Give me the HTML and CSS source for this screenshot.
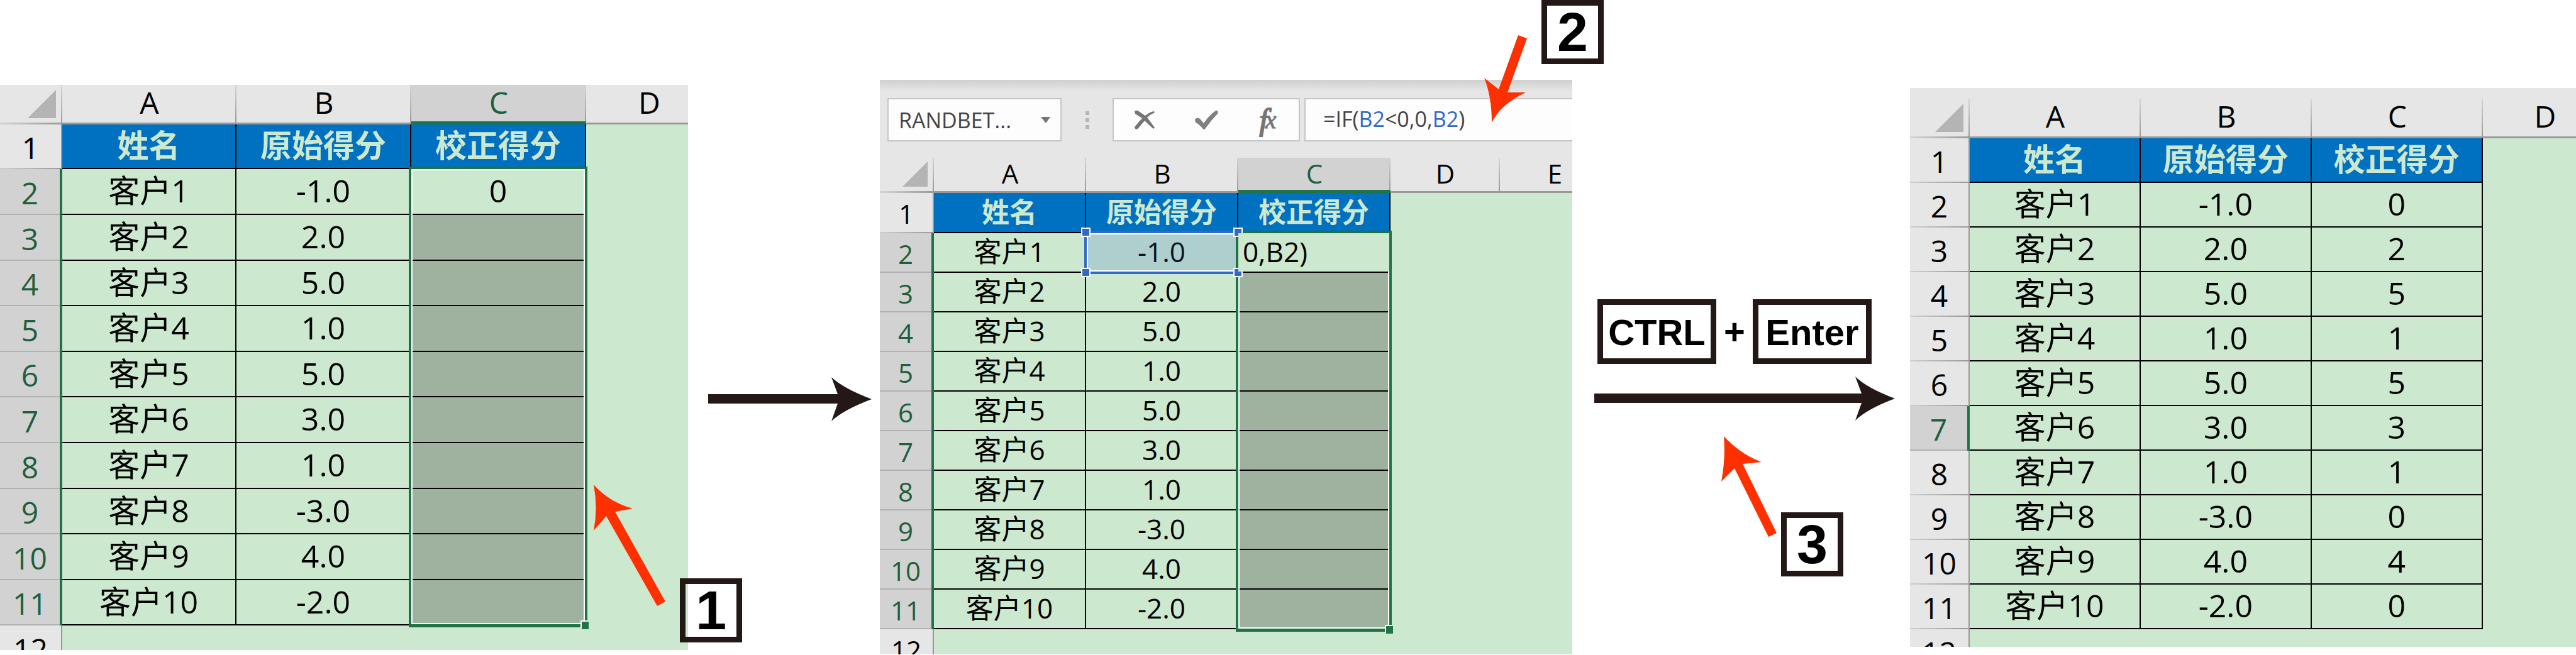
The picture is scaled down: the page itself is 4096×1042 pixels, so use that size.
FILE: index.html
```html
<!DOCTYPE html>
<html lang="zh-CN">
<head>
<meta charset="utf-8">
<title>校正得分</title>
<link rel="stylesheet" href="styles.css">
</head>
<body>
<main class="steps">
  <section class="sheet sheet-select">
    <table class="cells">
      <colgroup><col class="c-num"><col class="c-a"><col class="c-b"><col class="c-c"><col></colgroup>
      <thead>
        <tr><th class="corner"><svg class="tri" viewBox="0 0 45 45"><path d="M45 0V45H0Z"/></svg></th><th>A</th><th>B</th><th class="on">C</th><th class="cut">D</th></tr>
      </thead>
      <tbody>
        <tr class="title"><th>1</th><td>姓名</td><td>原始得分</td><td>校正得分</td><td class="free"></td></tr>
        <tr><th class="on">2</th><td>客户1</td><td>-1.0</td><td>0<div class="selection"><span class="handle"></span></div></td><td class="free"></td></tr>
        <tr><th class="on">3</th><td>客户2</td><td>2.0</td><td class="picked"></td><td class="free"></td></tr>
        <tr><th class="on">4</th><td>客户3</td><td>5.0</td><td class="picked"></td><td class="free"></td></tr>
        <tr><th class="on">5</th><td>客户4</td><td>1.0</td><td class="picked"></td><td class="free"></td></tr>
        <tr><th class="on">6</th><td>客户5</td><td>5.0</td><td class="picked"></td><td class="free"></td></tr>
        <tr><th class="on">7</th><td>客户6</td><td>3.0</td><td class="picked"></td><td class="free"></td></tr>
        <tr><th class="on">8</th><td>客户7</td><td>1.0</td><td class="picked"></td><td class="free"></td></tr>
        <tr><th class="on">9</th><td>客户8</td><td>-3.0</td><td class="picked"></td><td class="free"></td></tr>
        <tr><th class="on">10</th><td>客户9</td><td>4.0</td><td class="picked"></td><td class="free"></td></tr>
        <tr><th class="on">11</th><td>客户10</td><td>-2.0</td><td class="picked"></td><td class="free"></td></tr>
        <tr><th>12</th><td class="free" colspan="4"></td></tr>
      </tbody>
    </table>
  </section>

  <div class="link">
    <svg class="arrow" width="260" height="70" viewBox="0 0 260 70"><path d="M0 27H206L196 0Q215 18 260 35Q215 52 196 70L206 42H0Z"/></svg>
  </div>

  <section class="sheet sheet-formula">
    <div class="bar">
      <div class="namebox">
        <select aria-label="名称框"><option>RANDBET...</option></select>
        <svg class="drop" width="15" height="10" viewBox="0 0 15 10"><path d="M0 0H15L8 10Z"/></svg>
      </div>
      <div class="grip"><i></i><i></i><i></i></div>
      <div class="tools">
        <button type="button" aria-label="取消"><svg width="34" height="32" viewBox="0 0 34 32"><path d="M1 2Q5 -1 9 3L18 9Q25 3 32 2L33 4Q26 7 21 12Q26 18 33 28L31 30Q24 24 17 17L6 30Q2 32 1 27L13 13L2 6Z" fill="#757575"/></svg></button>
        <button type="button" aria-label="输入"><svg width="37" height="32" viewBox="0 0 37 32"><path d="M0 15Q3 11 8 14L14 21Q22 9 33 1Q38 0 36 6Q25 17 17 29Q14 33 12 29Q6 22 1 20Z" fill="#808080"/></svg></button>
        <button type="button" class="fx">f<span>x</span></button>
      </div>
      <div class="formula" role="textbox" contenteditable="true" aria-label="编辑栏" spellcheck="false">=IF(<span>B2</span>&lt;0,0,<span>B2</span>)</div>
    </div>
    <table class="cells">
      <colgroup><col class="c-num"><col class="c-a"><col class="c-b"><col class="c-c"><col class="c-d"><col></colgroup>
      <thead>
        <tr><th class="corner"><svg class="tri" viewBox="0 0 45 45"><path d="M45 0V45H0Z"/></svg></th><th>A</th><th>B</th><th class="on">C</th><th>D</th><th class="cut">E</th></tr>
      </thead>
      <tbody>
        <tr class="title"><th>1</th><td>姓名</td><td>原始得分</td><td>校正得分</td><td class="free" colspan="2"></td></tr>
        <tr><th class="on">2</th><td>客户1</td><td class="ref">-1.0<div class="refbox"><i></i><i></i><i></i><i></i></div></td><td><div class="selection"><span class="handle"></span></div><input class="edit" aria-label="C2" value="0,B2)"></td><td class="free" colspan="2"></td></tr>
        <tr><th class="on">3</th><td>客户2</td><td>2.0</td><td class="picked"></td><td class="free" colspan="2"></td></tr>
        <tr><th class="on">4</th><td>客户3</td><td>5.0</td><td class="picked"></td><td class="free" colspan="2"></td></tr>
        <tr><th class="on">5</th><td>客户4</td><td>1.0</td><td class="picked"></td><td class="free" colspan="2"></td></tr>
        <tr><th class="on">6</th><td>客户5</td><td>5.0</td><td class="picked"></td><td class="free" colspan="2"></td></tr>
        <tr><th class="on">7</th><td>客户6</td><td>3.0</td><td class="picked"></td><td class="free" colspan="2"></td></tr>
        <tr><th class="on">8</th><td>客户7</td><td>1.0</td><td class="picked"></td><td class="free" colspan="2"></td></tr>
        <tr><th class="on">9</th><td>客户8</td><td>-3.0</td><td class="picked"></td><td class="free" colspan="2"></td></tr>
        <tr><th class="on">10</th><td>客户9</td><td>4.0</td><td class="picked"></td><td class="free" colspan="2"></td></tr>
        <tr><th class="on">11</th><td>客户10</td><td>-2.0</td><td class="picked"></td><td class="free" colspan="2"></td></tr>
        <tr><th>12</th><td class="free" colspan="5"></td></tr>
      </tbody>
    </table>
  </section>

  <div class="link link-keys">
    <div class="keys"><kbd>CTRL</kbd><span>+</span><kbd>Enter</kbd></div>
    <svg class="arrow" width="478" height="70" viewBox="0 0 478 70"><path d="M0 27H425L415 0Q433 18 478 35Q433 52 415 70L425 42H0Z"/></svg>
  </div>

  <section class="sheet sheet-result">
    <table class="cells">
      <colgroup><col class="c-num"><col class="c-a"><col class="c-b"><col class="c-c"><col></colgroup>
      <thead>
        <tr><th class="corner"><svg class="tri" viewBox="0 0 45 45"><path d="M45 0V45H0Z"/></svg></th><th>A</th><th>B</th><th>C</th><th class="cut">D</th></tr>
      </thead>
      <tbody>
        <tr class="title"><th>1</th><td>姓名</td><td>原始得分</td><td>校正得分</td><td class="free"></td></tr>
        <tr><th>2</th><td>客户1</td><td>-1.0</td><td>0</td><td class="free"></td></tr>
        <tr><th>3</th><td>客户2</td><td>2.0</td><td>2</td><td class="free"></td></tr>
        <tr><th>4</th><td>客户3</td><td>5.0</td><td>5</td><td class="free"></td></tr>
        <tr><th>5</th><td>客户4</td><td>1.0</td><td>1</td><td class="free"></td></tr>
        <tr><th>6</th><td>客户5</td><td>5.0</td><td>5</td><td class="free"></td></tr>
        <tr><th class="on">7</th><td>客户6</td><td>3.0</td><td>3</td><td class="free"></td></tr>
        <tr><th>8</th><td>客户7</td><td>1.0</td><td>1</td><td class="free"></td></tr>
        <tr><th>9</th><td>客户8</td><td>-3.0</td><td>0</td><td class="free"></td></tr>
        <tr><th>10</th><td>客户9</td><td>4.0</td><td>4</td><td class="free"></td></tr>
        <tr><th>11</th><td>客户10</td><td>-2.0</td><td>0</td><td class="free"></td></tr>
        <tr><th>12</th><td class="free" colspan="4"></td></tr>
      </tbody>
    </table>
  </section>

  <svg class="pointers" viewBox="0 0 4096 1042">
    <path d="M944 771Q969 799 1006 809L978 814L1058 957L1045 964L964 821L944 844Q951 808 944 771Z"/>
    <path d="M2414 56L2428 61L2397 147H2426Q2386 166 2372 195Q2372 154 2360 124L2383 142Z"/>
    <path d="M2741 694Q2768 723 2801 735L2771 738L2825 848L2812 854L2758 745L2737 766Q2744 729 2741 694Z"/>
  </svg>
  <span class="badge badge-1">1</span>
  <span class="badge badge-2">2</span>
  <span class="badge badge-3">3</span>
</main>
</body>
</html>
```
FILE: styles.css
```css
* { box-sizing: border-box; }

body {
  margin: 0;
  background: #fff;
  color: #000;
  font-family: "Open Sans", "Noto Sans CJK SC", sans-serif;
}

.steps {
  position: relative;
  display: grid;
  grid-template-columns: 1094fr 305fr 1101fr 537fr 1059fr;
  grid-template-rows: 100vh;
  overflow: hidden;
}

/* Worksheets */
.sheet {
  --cell: 50px;
  --label: 48px;
  --head: 63px;
  --row: 71px;
  --tri: 45px;
  min-width: 0;
  overflow: hidden;
  background: #cce8cf;
}

.sheet-select { --cut: 39px; --sel: 733px; margin: 135px 0 8px; }
.sheet-formula { --cell: 44px; --label: 42px; --head: 56px; --row: 63px; --tri: 40px; --cut: 60px; --sel: 638px; margin: 127px 0 1px; }
.sheet-result { --cut: 50px; margin: 140px 0 13px; border-top: 17px solid #e6e6e6; }

.cells {
  width: 100%;
  table-layout: fixed;
  border-collapse: separate;
  border-spacing: 0;
  line-height: 1;
}

.sheet-select .c-num { width: 9.05%; }
.sheet-select .c-a { width: 25.32%; }
.sheet-select .c-b, .sheet-select .c-c { width: 25.41%; }
.sheet-formula .c-num { width: 7.81%; }
.sheet-formula .c-a, .sheet-formula .c-b, .sheet-formula .c-c { width: 21.98%; }
.sheet-formula .c-d { width: 15.8%; }
.sheet-result .c-num { width: 8.97%; }
.sheet-result .c-a, .sheet-result .c-b, .sheet-result .c-c { width: 25.68%; }

.cells tr { height: var(--row); }
.cells thead tr { height: var(--head); }
.sheet-select tbody tr:nth-child(n+2) { height: 73px; }
.sheet-select tbody tr:nth-child(5n+4), .sheet-select tbody tr:nth-child(5n+6) { height: 72px; }
.sheet-formula .title { height: 64px; }

.cells th, .cells td { padding: 0; text-align: center; vertical-align: middle; }

.cells td {
  position: relative;
  padding-bottom: 3px;
  font-size: var(--cell);
  border-right: 2px solid #000;
  border-bottom: 2px solid #000;
}

.cells .title td {
  background: #0070c0;
  color: #cce8cf;
  font-weight: bold;
}

.cells .title .free, .cells .free { border: 0; background: #cce8cf; }
.cells .picked { background: #9fb2a0; }

.cells th {
  font-size: var(--label);
  font-weight: normal;
  background: #e6e6e6;
}

.cells thead th {
  padding-bottom: 4px;
  border-bottom: 3px solid #999;
  background: linear-gradient(#d4d4d4, #999) right / 2px 100% no-repeat #e6e6e6;
}

.cells thead .on {
  padding-bottom: 2px;
  color: #1e5f3c;
  border-bottom: 5px solid #217346;
  background-color: #d2d2d2;
}

.cells thead .cut { padding-left: var(--cut); background: #e6e6e6; }

.cells thead .corner {
  border-bottom: 0;
  padding: 0 10px 10px 0;
  vertical-align: bottom;
  text-align: right;
  background:
    linear-gradient(to right, #d4d4d4, #999) bottom / 100% 3px no-repeat,
    linear-gradient(#d4d4d4, #999) right / 2px 100% no-repeat #e6e6e6;
}

.tri { display: inline-block; vertical-align: bottom; width: var(--tri); height: var(--tri); fill: #b4b4b4; }

.cells tbody th {
  padding-top: 2px;
  border-right: 2px solid #999;
  background: linear-gradient(to right, #cfcfcf, #999) bottom / 100% 2px no-repeat #e6e6e6;
}

.cells tbody .on {
  color: #1e5f3c;
  border-right: 4px solid #217346;
  background: linear-gradient(#b1b1b1, #b1b1b1) bottom / 100% 2px no-repeat #d2d2d2;
}

/* Range outline over column C */
.selection {
  position: absolute;
  z-index: 1;
  top: -4px;
  left: -4px;
  width: calc(100% + 8px);
  height: var(--sel);
  border: 4px solid #217346;
  border-bottom-width: 5px;
  box-shadow: inset 0 0 0 2px #fff;
}

.handle {
  position: absolute;
  right: -6px;
  bottom: -8px;
  width: 11px;
  height: 12px;
  background: #217346;
  box-shadow: -2px -2px 0 #fff;
}

.cells .ref { background: #aecfce; color: #0c1526; }

.refbox {
  position: absolute;
  z-index: 3;
  top: -4px;
  left: -3px;
  width: calc(100% + 5px);
  height: 69px;
  border: solid #3169c9;
  border-width: 4px 0 4px 4px;
  box-shadow: inset 2px 2px 0 #fff, inset 0 -2px 0 #fff;
}

.refbox i {
  position: absolute;
  width: 15px;
  height: 15px;
  background: #3169c9;
  border: 2px solid #fff;
}

.refbox i:nth-child(1) { left: -9px; top: -9px; }
.refbox i:nth-child(2) { right: -7px; top: -9px; }
.refbox i:nth-child(3) { left: -9px; bottom: -9px; }
.refbox i:nth-child(4) { right: -7px; bottom: -9px; }

.edit {
  position: absolute;
  z-index: 4;
  inset: 0;
  width: 100%;
  padding: 0 0 3px 7px;
  border: 0;
  outline: 0;
  background: #cce8cf;
  color: #000;
  font: inherit;
}

/* Formula bar */
.bar {
  display: flex;
  padding: 29px 0 26px 12px;
  background: linear-gradient(#cfcfce, #e6e6e6 18px);
  font-size: 34px;
  line-height: 40px;
  color: #444;
}

.namebox, .tools, .formula {
  height: 69px;
  border: 2px solid #c6c6c6;
  background: #fdfdfd;
}

.namebox {
  flex: 0 0 277px;
  display: flex;
  align-items: center;
  padding-right: 16px;
}

.namebox select {
  appearance: none;
  flex: 1;
  min-width: 0;
  height: 100%;
  padding: 0 0 0 16px;
  border: 0;
  background: none;
  color: inherit;
  font: inherit;
}

.drop { fill: #757575; }

.grip {
  flex: 0 0 81px;
  display: flex;
  flex-direction: column;
  align-items: center;
  justify-content: center;
  gap: 5px;
}

.grip i { width: 6px; height: 6px; background: #b4b4b4; }

.tools { flex: 0 0 298px; display: flex; margin-right: 7px; }

.tools button {
  flex: 1;
  display: flex;
  align-items: center;
  justify-content: center;
  padding: 0;
  border: 0;
  background: none;
}

.tools .fx {
  font: italic 48px/56px "Liberation Serif", serif;
  color: #757575;
  -webkit-text-stroke: 2px #757575;
}

.fx span { font-size: 40px; margin-left: -4px; -webkit-text-stroke-width: 1px; }

.formula {
  flex: 1;
  min-width: 0;
  padding: 11px 0 0 28px;
  border-right: 0;
  white-space: nowrap;
}

.formula span { color: #3169c9; }

/* Between the sheets */
.link { padding: 600px 0 0 32px; }
.link-keys { padding: 476px 0 0 35px; }
.arrow { display: block; fill: #231815; }

.keys {
  display: flex;
  align-items: center;
  padding: 0 0 20px 5px;
  font: bold 58px/1 "Liberation Sans", Arial, sans-serif;
}

.keys kbd {
  width: 189px;
  height: 103px;
  padding-top: 15px;
  border: 9px solid #231815;
  font: inherit;
  text-align: center;
}

.keys span { width: 58px; text-align: center; }

.pointers {
  position: absolute;
  inset: 0;
  z-index: 5;
  width: 100%;
  fill: #ff3000;
  pointer-events: none;
}

.badge {
  position: absolute;
  z-index: 6;
  width: 99px;
  height: 102px;
  border: 9px solid #231815;
  font: bold 88px/84px "Liberation Sans", Arial, sans-serif;
  text-align: center;
}

.badge-1 { left: 26.4%; top: 920px; }
.badge-2 { left: 59.84%; top: 0; }
.badge-3 { left: 69.14%; top: 815px; }
```
